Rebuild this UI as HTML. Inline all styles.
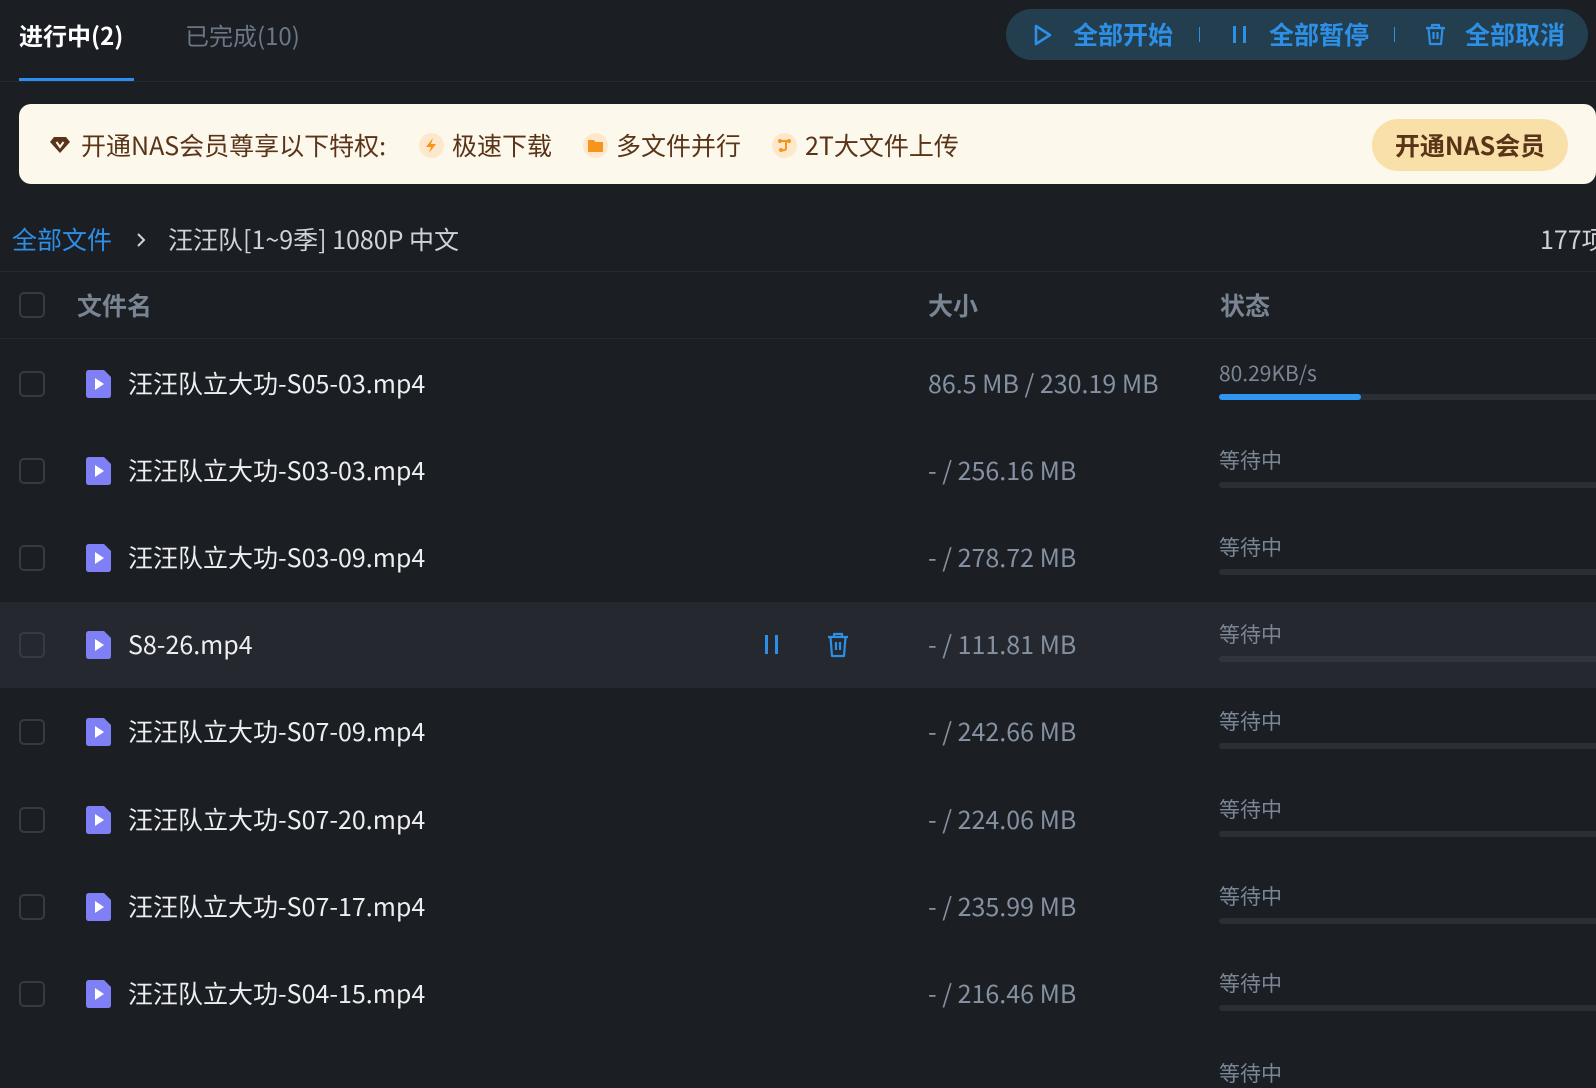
<!DOCTYPE html>
<html><head><meta charset="utf-8"><style>
*{margin:0;padding:0;box-sizing:border-box}
body{width:1596px;height:1063px;background:#1b1e23;overflow:hidden;position:relative;font-family:"Noto Sans CJK SC","Liberation Sans",sans-serif}
.a{position:absolute;white-space:nowrap}
.cb{position:absolute;left:19px;width:26px;height:26px;border:2px solid #363b43;border-radius:5px}
.fi{position:absolute;left:86px;width:25px;height:28px}
.fn{position:absolute;left:128px;font-size:25px;color:#eceef1;line-height:30px}
.sz{position:absolute;left:928px;font-size:25px;color:#8591a1;line-height:30px}
.st{position:absolute;left:1219px;font-size:21px;color:#7b8695;line-height:26px}
.bar{position:absolute;left:1219px;width:400px;height:6px;border-radius:3px;background:#2a2e35}
.bt{font-size:25px;font-weight:bold;color:#2d8fe6}
.bn{font-size:25px;color:#5a3418;line-height:32px}
</style></head><body>
<div class="a" style="left:19px;top:18px;font-size:24px;font-weight:bold;color:#fff;line-height:34px">进行中(2)</div>
<div class="a" style="left:185px;top:18px;font-size:24px;color:#6b7686;line-height:34px">已完成(10)</div>
<div class="a" style="left:19px;top:78px;width:115px;height:3px;background:#2b8ff0"></div>
<div class="a" style="left:0;top:81px;width:1596px;height:1px;background:#262a30"></div>

<div class="a" style="left:1006px;top:9px;width:582px;height:51px;border-radius:26px;background:#233f4f"></div>
<svg class="a" style="left:1033px;top:24px" width="20" height="22" viewBox="0 0 20 22"><path d="M3 2 L17 11 L3 20 Z" fill="none" stroke="#2d8fe6" stroke-width="2.6" stroke-linejoin="round"/></svg>
<div class="a bt" style="left:1073px;top:17px;line-height:34px">全部开始</div>
<div class="a" style="left:1199px;top:27px;width:1px;height:15px;background:#2d8fe6"></div>
<div class="a" style="left:1233px;top:26px;width:3px;height:17px;background:#2d8fe6"></div>
<div class="a" style="left:1243px;top:26px;width:3px;height:17px;background:#2d8fe6"></div>
<div class="a bt" style="left:1269px;top:17px;line-height:34px">全部暂停</div>
<div class="a" style="left:1394px;top:27px;width:1px;height:15px;background:#2d8fe6"></div>
<svg class="a" style="left:1424px;top:23px" width="23" height="23" viewBox="0 0 23 23"><path d="M2 5 H21 M8 5 V2 H15 V5 M4.5 5 L6 21 H17 L18.5 5 M9.5 9 V16 M13.5 9 V16" fill="none" stroke="#2d8fe6" stroke-width="2.2" stroke-linejoin="round"/></svg>
<div class="a bt" style="left:1465px;top:17px;line-height:34px">全部取消</div>

<div class="a" style="left:19px;top:104px;width:1577px;height:80px;border-radius:12px;background:#fdf8ec"></div>
<svg class="a" style="left:49px;top:136px" width="22" height="18" viewBox="0 0 22 18"><path d="M5 1 H17 L21 6 L11 17 L1 6 Z" fill="#5a3418"/><path d="M7.5 6 L11 11 L14.5 6" fill="none" stroke="#fdf8ec" stroke-width="2"/></svg>
<div class="a bn" style="left:81px;top:129px">开通NAS会员尊享以下特权:</div>
<div class="a" style="left:419px;top:133px;width:25px;height:25px;border-radius:50%;background:#fde8cc"></div>
<svg class="a" style="left:424px;top:137px" width="14" height="17" viewBox="0 0 14 17"><path d="M9 1 L2 10 H7 L5 16 L12 7 H7 Z" fill="#f7941d"/></svg>
<div class="a bn" style="left:452px;top:129px">极速下载</div>
<div class="a" style="left:583px;top:133px;width:25px;height:25px;border-radius:50%;background:#fde8cc"></div>
<svg class="a" style="left:588px;top:139px" width="15" height="13" viewBox="0 0 15 13"><path d="M0 1 H6 L7.5 3 H15 V13 H0 Z" fill="#f7941d"/></svg>
<div class="a bn" style="left:616px;top:129px">多文件并行</div>
<div class="a" style="left:772px;top:133px;width:25px;height:25px;border-radius:50%;background:#fde8cc"></div>
<svg class="a" style="left:777px;top:138px" width="15" height="15" viewBox="0 0 15 15"><path d="M3 3 H12 M9 3 V10 Q9 13 5 12" fill="none" stroke="#f7941d" stroke-width="2"/><circle cx="3" cy="3" r="2" fill="#f7941d"/><circle cx="12" cy="3" r="2" fill="#f7941d"/><circle cx="4" cy="12" r="2" fill="#f7941d"/></svg>
<div class="a bn" style="left:805px;top:129px">2T大文件上传</div>
<div class="a" style="left:1372px;top:119px;width:196px;height:52px;border-radius:26px;background:#f8e0a8;font-size:25px;font-weight:bold;color:#5a3418;text-align:center;line-height:52px">开通NAS会员</div>

<div class="a" style="left:12px;top:223px;font-size:25px;color:#2d8fe6;line-height:32px">全部文件</div>
<svg class="a" style="left:135px;top:231px" width="12" height="18" viewBox="0 0 12 18"><path d="M3 3 L9 9 L3 15" fill="none" stroke="#cdd3db" stroke-width="2"/></svg>
<div class="a" style="left:168px;top:223px;font-size:25px;color:#cdd3db;line-height:32px">汪汪队[1~9季] 1080P 中文</div>
<div class="a" style="left:1540px;top:223px;font-size:25px;color:#cdd3db;line-height:32px">177项</div>
<div class="a" style="left:0;top:271px;width:1596px;height:1px;background:#262a30"></div>
<div class="cb" style="top:292px"></div>
<div class="a" style="left:77px;top:289px;font-size:25px;font-weight:bold;color:#7a8594;line-height:32px">文件名</div>
<div class="a" style="left:928px;top:289px;font-size:25px;font-weight:bold;color:#7a8594;line-height:32px">大小</div>
<div class="a" style="left:1220px;top:289px;font-size:25px;font-weight:bold;color:#7a8594;line-height:32px">状态</div>
<div class="a" style="left:0;top:338px;width:1596px;height:1px;background:#262a30"></div>

<div class="a" style="left:0;top:602px;width:1596px;height:86px;background:#25282e"></div>
<div class="a" style="left:765px;top:635px;width:3px;height:19px;background:#2d8fe6"></div>
<div class="a" style="left:775px;top:635px;width:3px;height:19px;background:#2d8fe6"></div>
<svg class="a" style="left:826px;top:632px" width="24" height="26" viewBox="0 0 24 26"><path d="M2 5 H22 M8 5 V2 H16 V5 M4.5 5 L6 24 H18 L19.5 5 M10 10 V18 M14 10 V18" fill="none" stroke="#2d8fe6" stroke-width="2.2" stroke-linejoin="round"/></svg>

<svg width="0" height="0" style="position:absolute"><defs><g id="fic"><path d="M3 0 H18 L25 7 V25 Q25 28 22 28 H3 Q0 28 0 25 V3 Q0 0 3 0 Z" fill="#7f80f5"/><path d="M9 8 L18 14 L9 20 Z" fill="#fff"/></g></defs></svg>

<div class="cb" style="top:371px"></div><svg class="fi" style="top:370px"><use href="#fic"/></svg><div class="fn" style="top:368px">汪汪队立大功-S05-03.mp4</div><div class="sz" style="top:368px">86.5 MB / 230.19 MB</div><div class="st" style="top:360px">80.29KB/s</div><div class="bar" style="top:394px"></div><div class="a" style="left:1219px;top:394px;width:142px;height:6px;border-radius:3px;background:#2f97f2"></div>

<div class="cb" style="top:458px"></div><svg class="fi" style="top:457px"><use href="#fic"/></svg><div class="fn" style="top:455px">汪汪队立大功-S03-03.mp4</div><div class="sz" style="top:455px">- / 256.16 MB</div><div class="st" style="top:447px">等待中</div><div class="bar" style="top:482px"></div>

<div class="cb" style="top:545px"></div><svg class="fi" style="top:544px"><use href="#fic"/></svg><div class="fn" style="top:542px">汪汪队立大功-S03-09.mp4</div><div class="sz" style="top:542px">- / 278.72 MB</div><div class="st" style="top:534px">等待中</div><div class="bar" style="top:569px"></div>

<div class="cb" style="top:632px"></div><svg class="fi" style="top:631px"><use href="#fic"/></svg><div class="fn" style="top:629px">S8-26.mp4</div><div class="sz" style="top:629px">- / 111.81 MB</div><div class="st" style="top:621px">等待中</div><div class="bar" style="top:656px;background:#30343b"></div>

<div class="cb" style="top:719px"></div><svg class="fi" style="top:718px"><use href="#fic"/></svg><div class="fn" style="top:716px">汪汪队立大功-S07-09.mp4</div><div class="sz" style="top:716px">- / 242.66 MB</div><div class="st" style="top:708px">等待中</div><div class="bar" style="top:743px"></div>

<div class="cb" style="top:807px"></div><svg class="fi" style="top:806px"><use href="#fic"/></svg><div class="fn" style="top:804px">汪汪队立大功-S07-20.mp4</div><div class="sz" style="top:804px">- / 224.06 MB</div><div class="st" style="top:796px">等待中</div><div class="bar" style="top:831px"></div>

<div class="cb" style="top:894px"></div><svg class="fi" style="top:893px"><use href="#fic"/></svg><div class="fn" style="top:891px">汪汪队立大功-S07-17.mp4</div><div class="sz" style="top:891px">- / 235.99 MB</div><div class="st" style="top:883px">等待中</div><div class="bar" style="top:918px"></div>

<div class="cb" style="top:981px"></div><svg class="fi" style="top:980px"><use href="#fic"/></svg><div class="fn" style="top:978px">汪汪队立大功-S04-15.mp4</div><div class="sz" style="top:978px">- / 216.46 MB</div><div class="st" style="top:970px">等待中</div><div class="bar" style="top:1005px"></div>

<div class="st" style="top:1060px">等待中</div>
</body></html>
